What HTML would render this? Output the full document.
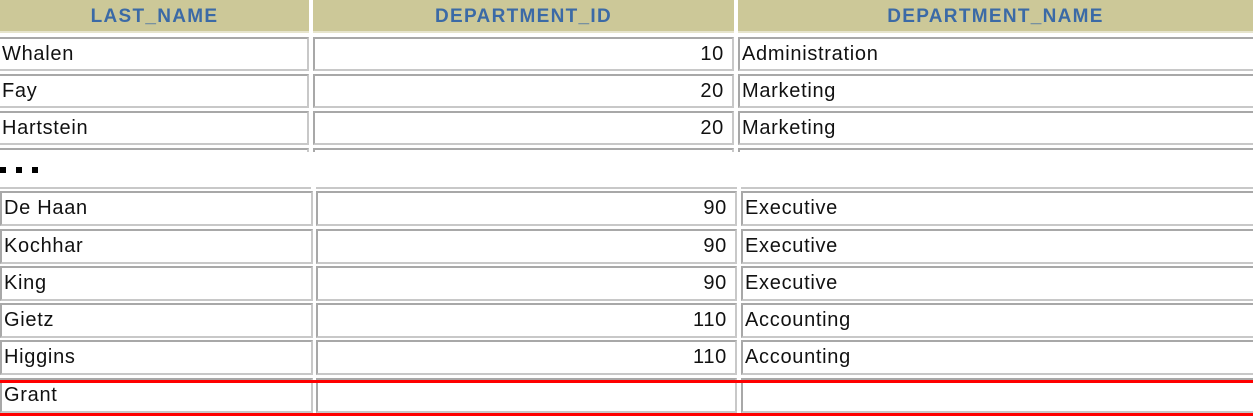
<!DOCTYPE html>
<html><head><style>
body{margin:0;width:1253px;height:417px;background:#fff;position:relative;overflow:hidden;font-family:"Liberation Sans",Arial,sans-serif;}
.h{position:absolute;top:0;height:31px;background:#ccc898;border-bottom:2px solid #e6e4cc;color:#3b6aa6;font-weight:bold;font-size:19px;line-height:33px;text-align:center;letter-spacing:1.3px}
.c{position:absolute;box-sizing:border-box;border:2px solid #c8c8c8;border-top-color:#a8a8a8;border-left-color:#a8a8a8;background:#fff;font-size:20px;letter-spacing:0.7px;line-height:30px;color:#111;padding:0 2px;white-space:nowrap}
.r{text-align:right;padding-right:8px}
.red{position:absolute;left:0;width:1253px;height:3px;background:#f00}
.dot{position:absolute;top:167px;width:6px;height:6px;background:#000}
</style></head><body>
<div class="h" style="left:0;width:309px">LAST_NAME</div>
<div class="h" style="left:313px;width:421px">DEPARTMENT_ID</div>
<div class="h" style="left:738px;width:515px">DEPARTMENT_NAME</div>

<div class="c" style="left:-2px;top:37px;width:311px;height:34px">Whalen</div>
<div class="c r" style="left:313px;top:37px;width:421px;height:34px">10</div>
<div class="c" style="left:738px;top:37px;width:517px;height:34px">Administration</div>
<div class="c" style="left:-2px;top:74px;width:311px;height:34px">Fay</div>
<div class="c r" style="left:313px;top:74px;width:421px;height:34px">20</div>
<div class="c" style="left:738px;top:74px;width:517px;height:34px">Marketing</div>
<div class="c" style="left:-2px;top:111px;width:311px;height:34px">Hartstein</div>
<div class="c r" style="left:313px;top:111px;width:421px;height:34px">20</div>
<div class="c" style="left:738px;top:111px;width:517px;height:34px">Marketing</div>
<div class="c" style="left:-2px;top:148px;width:311px;height:4px;border-bottom:0"></div>
<div class="c" style="left:313px;top:148px;width:421px;height:4px;border-bottom:0"></div>
<div class="c" style="left:738px;top:148px;width:517px;height:4px;border-bottom:0"></div>

<div class="dot" style="left:0"></div><div class="dot" style="left:16px"></div><div class="dot" style="left:32px"></div>

<div class="c" style="left:-2px;top:186px;width:313px;height:3px;border-top:0;border-left:0;border-right:0"></div>
<div class="c" style="left:316px;top:186px;width:421px;height:3px;border-top:0;border-left:0;border-right:0"></div>
<div class="c" style="left:741px;top:186px;width:514px;height:3px;border-top:0;border-left:0;border-right:0"></div>

<div class="c" style="left:0;top:191px;width:313px;height:35px">De Haan</div>
<div class="c r" style="left:316px;top:191px;width:421px;height:35px">90</div>
<div class="c" style="left:741px;top:191px;width:514px;height:35px">Executive</div>
<div class="c" style="left:0;top:229px;width:313px;height:35px">Kochhar</div>
<div class="c r" style="left:316px;top:229px;width:421px;height:35px">90</div>
<div class="c" style="left:741px;top:229px;width:514px;height:35px">Executive</div>
<div class="c" style="left:0;top:266px;width:313px;height:35px">King</div>
<div class="c r" style="left:316px;top:266px;width:421px;height:35px">90</div>
<div class="c" style="left:741px;top:266px;width:514px;height:35px">Executive</div>
<div class="c" style="left:0;top:303px;width:313px;height:35px">Gietz</div>
<div class="c r" style="left:316px;top:303px;width:421px;height:35px">110</div>
<div class="c" style="left:741px;top:303px;width:514px;height:35px">Accounting</div>
<div class="c" style="left:0;top:340px;width:313px;height:35px">Higgins</div>
<div class="c r" style="left:316px;top:340px;width:421px;height:35px">110</div>
<div class="c" style="left:741px;top:340px;width:514px;height:35px">Accounting</div>
<div class="c" style="left:0;top:378px;width:313px;height:35px">Grant</div>
<div class="c r" style="left:316px;top:378px;width:421px;height:35px"></div>
<div class="c" style="left:741px;top:378px;width:514px;height:35px"></div>

<div class="red" style="top:380px"></div>
<div class="red" style="top:413px"></div>
</body></html>
